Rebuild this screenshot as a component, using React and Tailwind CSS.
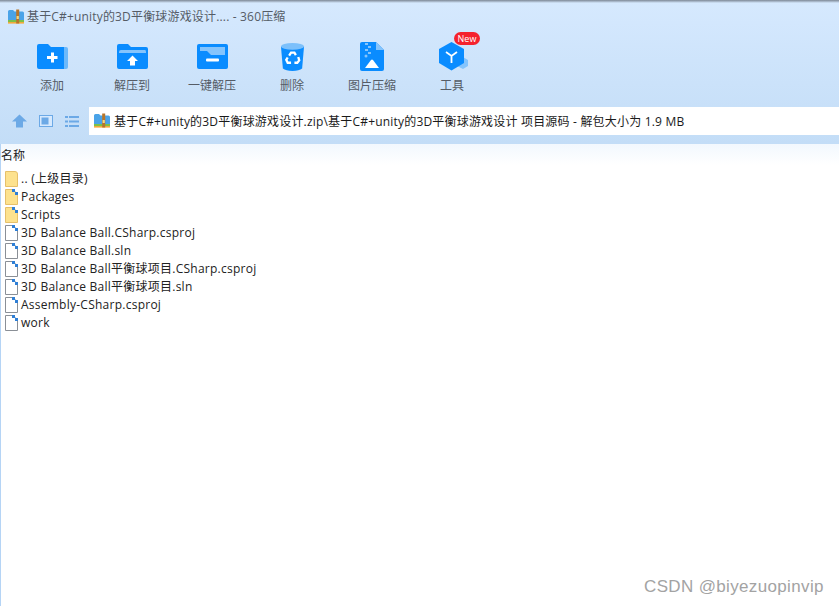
import React from 'react';

const font = "font-['Open_Sans','Noto_Sans_CJK_SC',sans-serif]";

const ZipIcon = ({ size = 16 }) => (
  <svg width={size} height={size} viewBox="0 0 16 16">
    <path d="M0 2.5 Q0 1 1.5 1 H5 L6.5 2.5 H14.5 Q16 2.5 16 4 V12 H0 Z" fill="#4aa3e8" />
    <rect x="0" y="11" width="16" height="2.2" fill="#7cc04a" />
    <rect x="0" y="13" width="16" height="1.6" fill="#f2a93b" />
    <rect x="8.2" y="0.5" width="3" height="14" fill="#b8752a" />
    <rect x="8.6" y="7" width="2.2" height="3" fill="#f5d77f" />
  </svg>
);

const AddIcon = () => (
  <svg width="32" height="26" viewBox="0 0 32 26" className="ml-[1px]">
    <path d="M0 2 Q0 0 2 0 H11 L14 3 H27 V25 H2 Q0 25 0 23 Z" fill="#0a8cff" />
    <path d="M27 3 H29 Q31 3 31 5 V23 Q31 25 29 25 H27 Z" fill="#6cb9fb" />
    <path d="M13 12 H17 V8.5 H20 V12 H23.5 V15 H20 V18.5 H17 V15 H13 Z" fill="#fff" transform="translate(-3 0)" />
  </svg>
);

const ExtractIcon = () => (
  <svg width="32" height="26" viewBox="0 0 32 26" className="ml-[1px]">
    <path d="M0 2 Q0 0 2 0 H11 L14 3 H29 Q31 3 31 5 V23 Q31 25 29 25 H2 Q0 25 0 23 Z" fill="#0a8cff" />
    <path d="M2 8 Q2 6 4 6 H28 Q29 6 29 8 V9 H2 Z" fill="#85c4fc" />
    <path d="M15.5 11.5 L21 17 H18 V21.5 H13 V17 H10 Z" fill="#fff" />
  </svg>
);

const QuickIcon = () => (
  <svg width="32" height="26" viewBox="0 0 32 26" className="ml-[1px]">
    <path d="M0 2 Q0 0 2 0 H29 Q31 0 31 2 V23 Q31 25 29 25 H2 Q0 25 0 23 Z" fill="#0a8cff" />
    <path d="M3 3 H28 V11 H14 L10 7 H3 Z" fill="#85c4fc" />
    <rect x="9" y="14.5" width="13" height="3" rx="1" fill="#fff" />
  </svg>
);

const TrashIcon = () => (
  <svg width="25" height="30" viewBox="0 0 26 30">
    <path d="M1 4 L3 27 Q6 29.5 13 29.5 Q20 29.5 23 27 L25 4 Z" fill="#0a8cff" />
    <ellipse cx="13" cy="4" rx="12" ry="3.5" fill="#7cc0fb" />
    <g stroke="#fff" strokeWidth="2.4" fill="none">
      <path d="M9.5 13.5 L11.5 10.5 H15 L16.5 13" />
      <path d="M19 15 L20 18.5 L18 21 H15" />
      <path d="M11.5 21 H8 L6.5 18 L8 15.5" />
    </g>
  </svg>
);

const ImageZipIcon = () => (
  <svg width="24" height="29" viewBox="0 0 24 29">
    <path d="M2 0 H16 L24 8 V27 Q24 29 22 29 H2 Q0 29 0 27 V2 Q0 0 2 0 Z" fill="#0a8cff" />
    <path d="M16 0 L24 8 H16 Z" fill="#85c4fc" />
    <g fill="#85c4fc">
      <rect x="5" y="1" width="3" height="2" />
      <rect x="8" y="4" width="3" height="2" />
      <rect x="5" y="7" width="3" height="2" />
      <rect x="8" y="10" width="3" height="2" />
      <circle cx="6" cy="14" r="1.5" />
    </g>
    <path d="M5 26 L11 18 Q12 17 13 18 L19 26 Z" fill="#fff" />
  </svg>
);

const ToolsIcon = () => (
  <svg width="30" height="29" viewBox="0 0 30 29" className="ml-[3px]">
    <path d="M22 14 L29 18 V24 L24 27 L18 24 Z" fill="#85c4fc" />
    <path d="M12.5 0 L25 7 V21 L12.5 28.5 L0 21 V7 Z" fill="#0a8cff" />
    <path d="M7 10 L12.5 14 L18 10 M12.5 14 V21" stroke="#fff" strokeWidth="1.8" fill="none" />
  </svg>
);

const UpFolder = () => (
  <svg width="13" height="16" viewBox="0 0 13 16">
    <path d="M0.5 0.5 H10 Q12.5 0.5 12.5 3 V15.5 H0.5 Z" fill="#fde28e" stroke="#e6c06a" />
  </svg>
);

const FolderRow = () => (
  <svg width="13" height="16" viewBox="0 0 13 16">
    <path d="M0.5 0.5 H8 L12.5 5 V15.5 H0.5 Z" fill="#fde28e" stroke="#e6c06a" />
    <rect x="7" y="0" width="3" height="3" fill="#2f7fd6" />
    <rect x="10" y="3" width="3" height="3" fill="#2f7fd6" />
  </svg>
);

const FileRow = () => (
  <svg width="13" height="16" viewBox="0 0 13 16">
    <path d="M0.5 0.5 H8 L12.5 5 V15.5 H0.5 Z" fill="#fff" stroke="#8a8f96" />
    <rect x="7" y="0" width="3" height="3" fill="#2f7fd6" />
    <rect x="10" y="3" width="3" height="3" fill="#2f7fd6" />
  </svg>
);

const tools = [
  { label: '添加', icon: <AddIcon /> },
  { label: '解压到', icon: <ExtractIcon /> },
  { label: '一键解压', icon: <QuickIcon /> },
  { label: '删除', icon: <TrashIcon /> },
  { label: '图片压缩', icon: <ImageZipIcon /> },
  { label: '工具', icon: <ToolsIcon />, badge: true },
];

const rows = [
  { name: '.. (上级目录)', type: 'up' },
  { name: 'Packages', type: 'folder' },
  { name: 'Scripts', type: 'folder' },
  { name: '3D Balance Ball.CSharp.csproj', type: 'file' },
  { name: '3D Balance Ball.sln', type: 'file' },
  { name: '3D Balance Ball平衡球项目.CSharp.csproj', type: 'file' },
  { name: '3D Balance Ball平衡球项目.sln', type: 'file' },
  { name: 'Assembly-CSharp.csproj', type: 'file' },
  { name: 'work', type: 'file' },
];

export default function App() {
  return (
    <div className={`relative w-[839px] h-[606px] overflow-hidden bg-white text-[13px] ${font}`}>
      <div className="h-[144px] bg-gradient-to-b from-[#d6e9fe] to-[#c3ddf7] flex flex-col">
        <div className="h-[3px] bg-gradient-to-b from-[#7d8896] to-[#d6e9fe]"></div>

        <div className="h-[27px] flex items-center pl-[8px] gap-[3px] text-[#555c66] text-[12px] tracking-[0.17px]">
          <ZipIcon />
          <span className="pt-[1px]">基于C#+unity的3D平衡球游戏设计.... - 360压缩</span>
        </div>

        <div className="h-[77px] flex pl-[12px]">
          {tools.map((t) => (
            <div key={t.label} className="relative w-[80px] flex flex-col items-center">
              <div className="h-[31px] mt-[11px] flex items-center justify-center">{t.icon}</div>
              {t.badge && (
                <span className="absolute left-[42px] top-[2px] w-[26px] h-[13px] rounded-full bg-[#f5222d] text-white text-[9px] leading-[13px] text-center">
                  New
                </span>
              )}
              <span className="mt-[5px] text-[12px] leading-[18px] text-[#555c66]">{t.label}</span>
            </div>
          ))}
        </div>

        <div className="h-[28px] flex items-center">
          <div className="w-[89px] flex items-center pl-[12px] gap-[12px]">
            <svg width="15" height="14" viewBox="0 0 15 14">
              <path d="M7.5 0.5 L15 7.5 H11 V13.5 H4 V7.5 H0 Z" fill="#6ca9e6" />
            </svg>
            <svg width="14" height="12" viewBox="0 0 14 12">
              <rect x="0.5" y="0.5" width="13" height="11" fill="#d6e9fe" stroke="#6ca9e6" />
              <rect x="2.5" y="2.5" width="7" height="7" fill="#6ca9e6" />
            </svg>
            <svg width="14" height="11" viewBox="0 0 14 11" fill="#6ca9e6">
              <rect x="0" y="0" width="3" height="2" />
              <rect x="4" y="0" width="10" height="2" />
              <rect x="0" y="4.5" width="3" height="2" />
              <rect x="4" y="4.5" width="10" height="2" />
              <rect x="0" y="9" width="3" height="2" />
              <rect x="4" y="9" width="10" height="2" />
            </svg>
          </div>
          <div className="flex-1 h-full bg-white flex items-center pl-[5px] gap-[4px] text-[#1a1a1a] text-[12px] tracking-[0.19px]">
            <ZipIcon />
            <span className="pt-[1px]">基于C#+unity的3D平衡球游戏设计.zip\基于C#+unity的3D平衡球游戏设计 项目源码 - 解包大小为 1.9 MB</span>
          </div>
        </div>
      </div>

      <div className="h-[462px] border-l border-[#b5d4f5]">
        <div className="h-[21px] bg-gradient-to-b from-[#f2f8fe] to-white text-[12px] leading-[24px] text-[#222]">
          名称
        </div>
        <div className="pt-[5px] pl-[4px]">
          {rows.map((r) => (
            <div key={r.name} className="h-[18px] flex items-center gap-[3px] text-[12px] text-[#222] tracking-[0.25px]">
              {r.type === 'file' ? <FileRow /> : r.type === 'up' ? <UpFolder /> : <FolderRow />}
              <span>{r.name}</span>
            </div>
          ))}
        </div>
      </div>

      <div className="absolute left-[644px] top-[576px] text-[17px] leading-[22px] tracking-[0.35px] text-[#a3a3a3] font-['Liberation_Sans',sans-serif]">
        CSDN @biyezuopinvip
      </div>
    </div>
  );
}
